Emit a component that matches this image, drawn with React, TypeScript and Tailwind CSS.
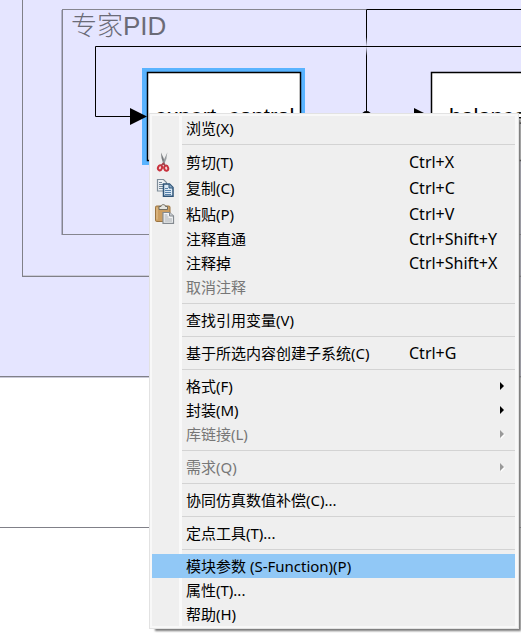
import type { ReactNode } from "react";

type Item = {
  label: string;
  shortcut?: string;
  submenu?: boolean;
  disabled?: boolean;
  selected?: boolean;
  icon?: ReactNode;
};

function CutIcon() {
  return (
    <svg viewBox="0 0 18 20" className="h-5 w-[18px]" aria-hidden="true">
      <path d="M5 .5 5.500 6 7.500 12.500 9.200 11.500 7.500 6z" fill="#76797c" />
      <path d="M11.300 .5 8.500 6.500 6 12.500 7.800 13 10.300 7z" fill="#94989b" />
      <path d="M11.300 .5 10.300 7 9.500 8.500z" fill="#c3c6c8" />
      <ellipse cx="4" cy="15.800" rx="2" ry="2.600" fill="#f1d3d5" stroke="#c8323d" strokeWidth="2" transform="rotate(20 4 15.800)" />
      <ellipse cx="10.200" cy="16.200" rx="2" ry="2.600" fill="#f1d3d5" stroke="#c8323d" strokeWidth="2" transform="rotate(-15 10.200 16.200)" />
      <path d="M5.200 13.500 7.300 11.500 9.300 13.800" fill="none" stroke="#a8414a" strokeWidth="1.600" />
    </svg>
  );
}

function CopyIcon() {
  return (
    <svg viewBox="0 0 18 20" className="h-5 w-[18px]" aria-hidden="true">
      <path d="M1.500 1.500h6l3 3v8.500h-9z" fill="#eef1f4" stroke="#7f8d99" strokeWidth="1.200" />
      <path d="M3 4.500h3M3 6.500h5M3 8.500h5M3 10.500h5" stroke="#71869a" />
      <path d="M7.500 6h6l3.500 3.500V18.300H7.500z" fill="#dbe9f5" stroke="#2f5478" strokeWidth="1.500" />
      <path d="M13 6v4h4" fill="#8aaac6" stroke="#2f5478" />
      <path d="M9 10.500h3M9 12.500h6M9 14.500h6M9 16.500h6" stroke="#5580aa" />
    </svg>
  );
}

function PasteIcon() {
  return (
    <svg viewBox="0 0 18 20" className="h-5 w-[18px] overflow-visible" aria-hidden="true">
      <rect x="-.5" y="2" width="14.500" height="15.500" rx="1.200" fill="#cb9e62" stroke="#9b7440" />
      <path d="M1 3.500v12" stroke="#e6c592" />
      <path d="M3 5.500V2.500h2C5 0 9.500 0 9.500 2.500h2v3z" fill="#e4e4df" stroke="#6f6c63" />
      <path d="M7 8.500h6.500l4 3.500v7.300H7z" fill="#f3f4f5" stroke="#848a90" strokeWidth="1.200" />
      <path d="M13.500 8.500V12h4" fill="#c9cdd1" stroke="#848a90" />
      <path d="M8.500 11h3M8.500 13h4M8.500 15h7.500M8.500 17h7.500" stroke="#a4a9ae" />
    </svg>
  );
}

const groups: Item[][] = [
  [{ label: "浏览(X)" }],
  [
    { label: "剪切(T)", shortcut: "Ctrl+X", icon: <CutIcon /> },
    { label: "复制(C)", shortcut: "Ctrl+C", icon: <CopyIcon /> },
    { label: "粘贴(P)", shortcut: "Ctrl+V", icon: <PasteIcon /> },
    { label: "注释直通", shortcut: "Ctrl+Shift+Y" },
    { label: "注释掉", shortcut: "Ctrl+Shift+X" },
    { label: "取消注释", disabled: true },
  ],
  [{ label: "查找引用变量(V)" }],
  [{ label: "基于所选内容创建子系统(C)", shortcut: "Ctrl+G" }],
  [
    { label: "格式(F)", submenu: true },
    { label: "封装(M)", submenu: true },
    { label: "库链接(L)", submenu: true, disabled: true },
  ],
  [{ label: "需求(Q)", submenu: true, disabled: true }],
  [{ label: "协同仿真数值补偿(C)..." }],
  [{ label: "定点工具(T)..." }],
  [
    { label: "模块参数 (S-Function)(P)", selected: true },
    { label: "属性(T)..." },
    { label: "帮助(H)" },
  ],
];

function MenuRow({ item }: { item: Item }) {
  return (
    <button
      type="button"
      role="menuitem"
      disabled={item.disabled}
      className={`flex w-full items-center text-left ${item.icon ? "h-[26px]" : "h-6"} ${
        item.selected ? "bg-[#91c8f6]" : ""
      } ${item.disabled ? "text-[#777777]" : "text-black"}`}
    >
      <span className="flex w-[34px] shrink-0 pl-1">{item.icon}</span>
      <span className="grow whitespace-nowrap">{item.label}</span>
      {item.shortcut && (
        <span className="w-[106px] shrink-0 text-[16px] leading-6 whitespace-nowrap">{item.shortcut}</span>
      )}
      {item.submenu && (
        <svg viewBox="0 0 5 8" className="mr-[10px] h-2 w-[5px] shrink-0 overflow-visible" aria-hidden="true">
          {item.disabled && <path d="M1 1v8l4-4z" fill="white" />}
          <path d="M0 0v8l4-4z" fill={item.disabled ? "#999999" : "black"} />
        </svg>
      )}
    </button>
  );
}

function ContextMenu() {
  return (
    <div
      role="menu"
      className="absolute top-[113px] left-[149px] w-[370px] border border-[#e2e2e2] bg-[#f8f8f8] p-[2px] pr-[3px] text-[15px] leading-6 shadow-[4px_4px_2px_-2px_#777777]"
    >
      <div className="bg-[linear-gradient(to_right,#efefef_27px,#f9f9f9_27px,#f9f9f9_30px,#efefef_30px)]">
        {groups.map((group, i) => (
          <div key={i} role="group">
            {i > 0 && (
              <div role="separator" className="flex h-[9px] items-center pl-[30px]">
                <div className="h-px grow bg-[#d3d3d3]" />
              </div>
            )}
            {group.map((item) => (
              <MenuRow key={item.label} item={item} />
            ))}
          </div>
        ))}
      </div>
    </div>
  );
}

function Diagram() {
  return (
    <svg className="absolute inset-0 h-full w-full" role="img" aria-label="Simulink">
      <defs>
        <linearGradient id="hop" x1="0" y1="0" x2="0" y2="1">
          <stop offset="0" stopColor="#e5e5ff" stopOpacity="0" />
          <stop offset=".5" stopColor="#e5e5ff" />
          <stop offset="1" stopColor="#e5e5ff" stopOpacity="0" />
        </linearGradient>
      </defs>
      <g shapeRendering="crispEdges">
        <rect x="-2" y="-2" width="3000" height="379" fill="#e5e5ff" />
        <path d="M0 376.500H3000M22.500 0V276M22 276.500H3000M0 527.500H3000" stroke="#808088" fill="none" />
        <path d="M0 377.500H3000M23 275.500H3000" stroke="#cacad8" />
        <path d="M62.500 234V9.500H366M62 234.500H3000" stroke="#85858f" fill="none" />
        <path d="M61.500 10V235" stroke="#b4b4cc" />
      </g>
      <text x="71" y="35" fontSize="26" fill="#6b6b77" fontWeight="300" fontFamily="'Liberation Sans', 'Noto Sans CJK SC', sans-serif">
        专家PID
      </text>
      <path d="M366.500 113V9.500H3000" stroke="black" fill="none" />
      <rect x="365" y="37" width="3" height="19" fill="url(#hop)" />
      <rect x="142" y="68" width="163" height="97" fill="#59b3ff" />
      <rect x="147.500" y="72.500" width="153" height="88" fill="white" stroke="black" strokeWidth="1.500" />
      <rect x="431.500" y="72.500" width="154" height="88" fill="white" stroke="black" strokeWidth="1.500" />
      <path d="M3000 46.500H95.500V116.500H131" stroke="black" fill="none" />
      <path d="M130 108v17l17-8.500zM414 108v17l17-8.500z" />
      <circle cx="366.500" cy="116" r="5" />
      <g fontSize="22" fontFamily="'Liberation Sans', Arial, sans-serif">
        <text x="155" y="124">expert_control</text>
        <text x="449" y="124">balance</text>
      </g>
    </svg>
  );
}

export default function App() {
  return (
    <main className="relative min-h-screen overflow-hidden bg-white font-['Noto_Sans','Noto_Sans_CJK_SC',sans-serif]">
      <Diagram />
      <ContextMenu />
    </main>
  );
}
